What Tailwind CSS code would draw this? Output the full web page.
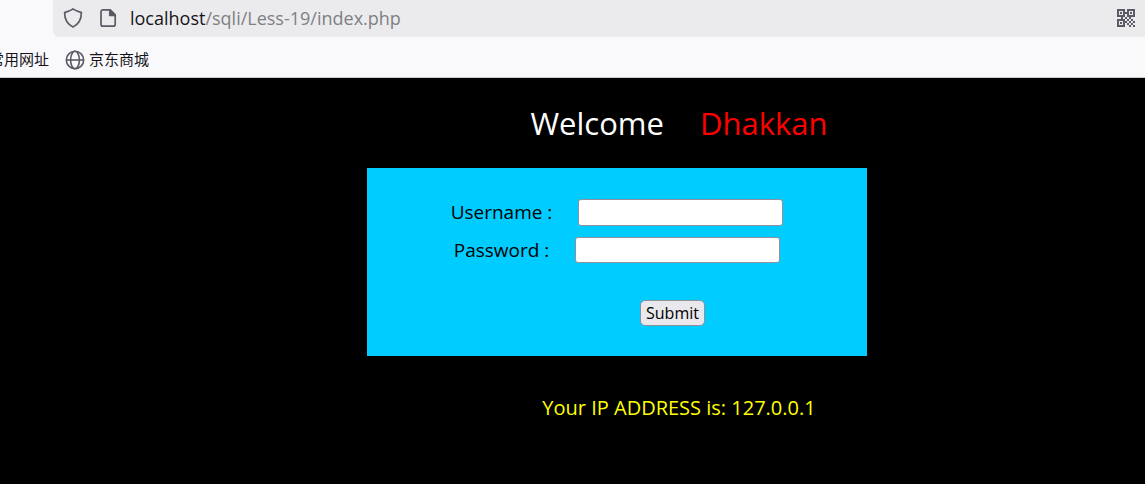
<!DOCTYPE html>
<html lang="en">

<head>
    <meta charset="UTF-8">
    <meta name="viewport" content="width=device-width, initial-scale=1.0">
    <title>Less-19</title>
    <script src="https://cdn.jsdelivr.net/npm/@tailwindcss/browser@4"></script>
</head>

<body class="min-h-screen overflow-x-hidden bg-black font-['Open_Sans','Noto_Sans_CJK_SC',sans-serif]">
    <!-- Browser toolbar -->
    <header class="h-[78px] overflow-hidden border-b border-[#cccccf] bg-[#f9f9fb]">
        <div class="ml-[53px] flex h-[37px] items-center rounded-bl-md bg-[#ebebed] px-[10px] pb-[2px]">
            <svg class="h-5 w-5 shrink-0" viewBox="0 0 20 20" fill="none" stroke="#5b5b66" stroke-width="1.7" stroke-linejoin="round" aria-hidden="true">
                <path d="M10 .9 C8 2.5 4.7 3.5 1.6 4.6 C1.6 10.2 3.2 15.8 10 19 C16.8 15.8 18.4 10.2 18.4 4.6 C15.3 3.5 12 2.5 10 .9z" />
            </svg>
            <svg class="ml-4 h-5 w-[18px] shrink-0" viewBox="0 0 18 20" fill="none" stroke="#5b5b66" stroke-width="1.7" stroke-linejoin="round" aria-hidden="true">
                <path d="M4 1.8h7.2l5 5v9.4a2 2 0 0 1-2 2H4a2 2 0 0 1-2-2V3.8a2 2 0 0 1 2-2z" />
                <path d="M10.8 1.8v5.6h5.4z" fill="#5b5b66" />
            </svg>
            <p class="ml-[13px] text-[18px] leading-6 text-[#808083]"><span class="text-[#15141a]">localhost</span>/sqli/Less-19/index.php</p>
            <svg class="ml-auto h-[18px] w-[18px] shrink-0" viewBox="0 0 18 18" fill="#5b5b66" aria-hidden="true">
                <path fill-rule="evenodd" d="M0 0h8v8H0zM2 2v4h4V2zM10 0h8v8h-8zM12 2v4h4V2zM0 10h8v8H0zM2 12v4h4v-4z" />
                <path d="M3 3h2v2H3zM13 3h2v2h-2zM3 13h2v2H3zM8 3h2v2H8zM4 8h2v2H4zM8 8h2v2H8zM12 8h2v2h-2zM10 10h2v2h-2zM14 10h2v2h-2zM8 12h2v2H8zM12 12h2v2h-2zM16 12h2v2h-2zM10 14h2v2h-2zM14 14h2v2h-2zM12 16h2v2h-2zM16 16h2v2h-2z" />
            </svg>
        </div>
        <nav class="-ml-[11px] flex h-[45px] items-center text-[15px] text-[#15141a]">
            <a href="#" class="font-['Noto_Sans_CJK_SC',sans-serif]">常用网址</a>
            <a href="#" class="ml-4 flex items-center gap-1 font-['Noto_Sans_CJK_SC',sans-serif]">
                <svg class="h-5 w-5" viewBox="0 0 20 20" fill="none" stroke="#5b5b66" stroke-width="1.6" aria-hidden="true">
                    <circle cx="10" cy="10" r="8.7" />
                    <ellipse cx="10" cy="10" rx="4.4" ry="8.7" />
                    <path d="M1.3 10h17.4" />
                </svg>
                京东商城
            </a>
        </nav>
    </header>

    <!-- Page content -->
    <main class="flex flex-col items-center pl-[89px]">
        <h1 class="mt-[25px] flex gap-[36px] pl-[124px] text-[31px] leading-10 text-white">
            <span>Welcome</span>
            <span class="text-[#ff0000]">Dhakkan</span>
        </h1>

        <form class="mt-[25px] flex w-full max-w-[500px] flex-col items-center bg-[#00ccff] pt-[31px] pb-[30px] text-[19px]">
            <div class="flex items-center gap-[26px]">
                <label for="uname" class="leading-[27px]">Username :</label>
                <input type="text" id="uname" name="uname" class="h-[27px] w-[205px] rounded-[3px] border border-[#8f8f9d] bg-white px-1 text-base">
            </div>
            <div class="mt-[11px] flex items-center gap-[26px]">
                <label for="passwd" class="leading-[26px]">Password :</label>
                <input type="password" id="passwd" name="passwd" class="h-[26px] w-[205px] rounded-[3px] border border-[#8f8f9d] bg-white px-1 text-base">
            </div>
            <div class="mt-[37px] flex pl-[111px]">
                <button type="submit" class="h-[26px] w-[65px] rounded-[5px] border border-[#8f8f9d] bg-[#e9e9ed] text-base leading-6">Submit</button>
            </div>
        </form>

        <p class="mt-[37px] pl-[124px] text-[20px] leading-[30px] text-[#ffff00]">Your IP ADDRESS is: 127.0.0.1</p>
    </main>
</body>

</html>
